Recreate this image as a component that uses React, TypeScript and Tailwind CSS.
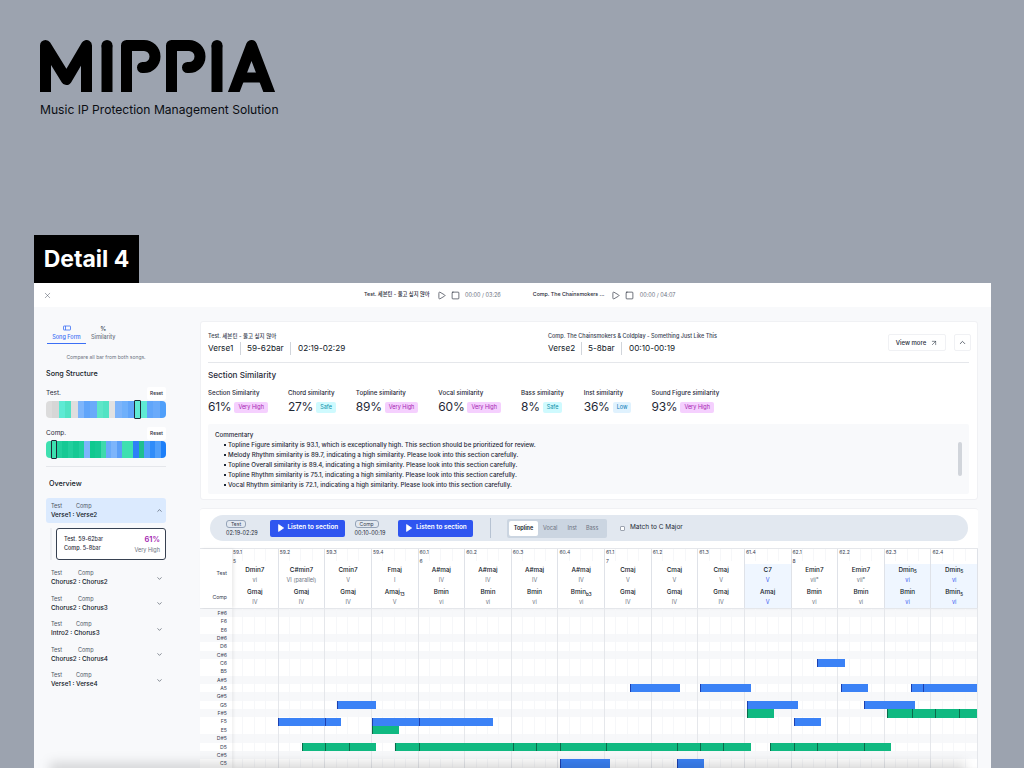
import React from 'react';
import { X, Play, Square, ChevronDown, ChevronUp, ArrowUpRight } from 'lucide-react';

const PAD_FONT = "font-['Inter','Noto_Sans_CJK_KR',sans-serif]";

const testBar = [
  '#dcdcdc', '#d6d6d6', '#5eead4', '#52e3c4', '#dedede', '#7db5fb', '#60a5fa', '#6aaafa', '#5ee6c8', '#52e3c4',
  '#e2e2e2', '#7db5fb', '#6fb0fb', '#60a5fa', '#5eead4', '#5eead4', '#60a5fa', '#6aaafa', '#4f9ffa',
];
const compBar = [
  '#3ee0b0', '#3ee0b0', '#22cf9d', '#16c994', '#22cf9d', '#16c994', '#22cf9d', '#7db5fb', '#0fc98f', '#16c994',
  '#3ed9ab', '#6aaafa', '#7db5fb', '#5b9ff8', '#3ee0b0', '#3ee0b0', '#2f80f7', '#1fbf8f', '#4f9ffa', '#2f8cf9', '#4f9ffa', '#1d7ff8',
];

const overview = [
  { test: 'Chorus2', comp: 'Chorus2', offset: 'pl-[16px]' },
  { test: 'Chorus2', comp: 'Chorus3', offset: 'pl-[16px]' },
  { test: 'Intro2', comp: 'Chorus3', offset: 'pl-[14px]' },
  { test: 'Chorus2', comp: 'Chorus4', offset: 'pl-[16px]' },
  { test: 'Verse1', comp: 'Verse4', offset: 'pl-[14px]' },
];

const stats = [
  { label: 'Section Similarity', value: '61%', level: 'Very High' },
  { label: 'Chord similarity', value: '27%', level: 'Safe' },
  { label: 'Topline similarity', value: '89%', level: 'Very High' },
  { label: 'Vocal similarity', value: '60%', level: 'Very High' },
  { label: 'Bass similarity', value: '8%', level: 'Safe' },
  { label: 'Inst similarity', value: '36%', level: 'Low' },
  { label: 'Sound Figure similarity', value: '93%', level: 'Very High' },
];

const commentary = [
  'Topline Figure similarity is 93.1, which is exceptionally high. This section should be prioritized for review.',
  'Melody Rhythm similarity is 89.7, indicating a high similarity. Please look into this section carefully.',
  'Topline Overall similarity is 89.4, indicating a high similarity. Please look into this section carefully.',
  'Topline Rhythm similarity is 75.1, indicating a high similarity. Please look into this section carefully.',
  'Vocal Rhythm similarity is 72.1, indicating a high similarity. Please look into this section carefully.',
];

const beats = [
  { pos: '59.1', bar: '5', test: 'Dmin7', testDeg: 'vi', comp: 'Gmaj', compDeg: 'IV' },
  { pos: '59.2', test: 'C#min7', testDeg: 'VI (parallel)', comp: 'Gmaj', compDeg: 'IV' },
  { pos: '59.3', test: 'Cmin7', testDeg: 'V', comp: 'Gmaj', compDeg: 'IV' },
  { pos: '59.4', test: 'Fmaj', testDeg: 'I', comp: 'Amaj', compSub: '13', compDeg: 'V' },
  { pos: '60.1', bar: '6', test: 'A#maj', testDeg: 'IV', comp: 'Bmin', compDeg: 'vi' },
  { pos: '60.2', test: 'A#maj', testDeg: 'IV', comp: 'Bmin', compDeg: 'vi' },
  { pos: '60.3', test: 'A#maj', testDeg: 'IV', comp: 'Bmin', compDeg: 'vi' },
  { pos: '60.4', test: 'A#maj', testDeg: 'IV', comp: 'Bmin', compSub: 'b3', compDeg: 'vi' },
  { pos: '61.1', bar: '7', test: 'Cmaj', testDeg: 'V', comp: 'Gmaj', compDeg: 'IV' },
  { pos: '61.2', test: 'Cmaj', testDeg: 'V', comp: 'Gmaj', compDeg: 'IV' },
  { pos: '61.3', test: 'Cmaj', testDeg: 'V', comp: 'Gmaj', compDeg: 'IV' },
  { pos: '61.4', test: 'C7', testDeg: 'V', comp: 'Amaj', compDeg: 'V', match: true },
  { pos: '62.1', bar: '8', test: 'Emin7', testDeg: 'vii°', comp: 'Bmin', compDeg: 'vi' },
  { pos: '62.2', test: 'Emin7', testDeg: 'vii°', comp: 'Bmin', compDeg: 'vi' },
  { pos: '62.3', test: 'Dmin', testSub: '5', testDeg: 'vi', comp: 'Bmin', compDeg: 'vi', match: true },
  { pos: '62.4', test: 'Dmin', testSub: '5', testDeg: 'vi', comp: 'Bmin', compSub: '5', compDeg: 'vi', match: true },
];

const pitches = [
  'F#6', 'F6', 'E6', 'D#6', 'D6', 'C#6', 'C6', 'B5', 'A#5', 'A5', 'G#5', 'G5', 'F#5', 'F5', 'E5', 'D#5', 'D5', 'C#5', 'C5',
];

// x = page px at each segment edge, row = index into pitches
const blueNotes = [
  { row: 6, x: [817, 845] },
  { row: 9, x: [629.7, 680.3] },
  { row: 9, x: [700, 751] },
  { row: 9, x: [841, 868] },
  { row: 9, x: [911, 923.3, 977.5] },
  { row: 11, x: [337, 376] },
  { row: 11, x: [747, 797.7] },
  { row: 11, x: [864.3, 915] },
  { row: 13, x: [278.3, 325.3, 340.7] },
  { row: 13, x: [372.3, 419.3, 492.7] },
  { row: 13, x: [794, 821] },
  { row: 18, x: [559.7, 610] },
  { row: 18, x: [677, 704] },
];
const greenNotes = [
  { row: 12, x: [747, 774] },
  { row: 12, x: [887.3, 911.7, 935, 958.7, 977.5] },
  { row: 14, x: [372.3, 399] },
  { row: 16, x: [301.7, 325.3, 348.7, 376] },
  { row: 16, x: [395, 419.3, 512.7, 536.3, 560, 606, 677.3, 700, 723.3, 751] },
  { row: 16, x: [770, 794.3, 817.3, 864.3, 891.3] },
];

const ROW_H = 8.35;

const Logo = () => (
  <svg width="236" height="52" viewBox="40 40 236 52" fill="none" stroke="#000" strokeWidth="11" className="block">
    <path d="M45.5 98V45.5L66.5 79.5L86.5 45.5V98" strokeLinejoin="round" />
    <path d="M107 98V45.5" />
    <circle cx="107" cy="45.5" r="5.5" fill="#000" stroke="none" />
    <path d="M126.5 98V45.5H144A11 11 0 0 1 144 67.5H142.5" strokeLinejoin="round" strokeLinecap="round" />
    <path d="M171.5 98V45.5H189A11 11 0 0 1 189 67.5H187.5" strokeLinejoin="round" strokeLinecap="round" />
    <path d="M217 98V45.5" />
    <circle cx="217" cy="45.5" r="5.5" fill="#000" stroke="none" />
    <path d="M231.5 98L251.5 45.5L271.5 98" strokeLinejoin="round" />
    <path d="M240 77.5H263" strokeWidth="10" />
  </svg>
);

const LevelPill = ({ level }: { level: string }) => {
  const tone =
    level === 'Very High'
      ? 'bg-[#f5d0fe] text-[#a21caf]'
      : level === 'Safe'
        ? 'bg-[#cffafe] text-[#0e8fa8]'
        : 'bg-[#e0f2fe] text-[#0277b5]';
  return <span className={`inline-flex h-[11px] items-center rounded-[2px] px-[4px] text-[5.5px] ${tone}`}>{level}</span>;
};

const StructureBar = ({ colors, selected }: { colors: string[]; selected: number }) => (
  <div className="flex h-[17px] overflow-visible">
    {colors.map((color, i) => (
      <div
        key={i}
        className={`relative flex-1 ${i === 0 ? 'rounded-l-[4px]' : ''} ${i === colors.length - 1 ? 'rounded-r-[4px]' : ''}`}
        style={{ backgroundColor: color }}
      >
        {i === selected && (
          <div className="absolute inset-x-0 top-[-1px] bottom-[-1px] rounded-[1px] border border-[#1f2937]" />
        )}
      </div>
    ))}
  </div>
);

const ListenGroup = ({ tag, time }: { tag: string; time: string }) => (
  <div className="flex items-center">
    <div className="flex w-[43.5px] flex-col items-start">
      <span className="rounded-[3px] border border-[#94a3b8] px-[4px] text-[5px] leading-[6px] text-[#374151]">{tag}</span>
      <span className="mt-[1px] text-[5.5px] leading-[8px] text-[#1f2937]">{time}</span>
    </div>
    <button className="flex h-[17px] w-[75px] items-center rounded-[2px] bg-[#2f55f0] pl-[8px] text-[6.4px] font-semibold text-white">
      <svg width="6" height="8" viewBox="0 0 6 8" className="mr-[4px]">
        <path d="M0.6 0.6L5.6 4L0.6 7.4Z" fill="#fff" stroke="#fff" strokeWidth="0.8" strokeLinejoin="round" />
      </svg>
      Listen to section
    </button>
  </div>
);

const App = () => {
  return (
    <div className={`relative flex h-[768px] w-[1024px] flex-col overflow-hidden bg-[#9ca3af] ${PAD_FONT}`}>
      <div className="pl-[40px] pt-[40px]">
        <Logo />
        <p className="mt-[11px] text-[12.1px] leading-[14px] text-[#0b0d12]">Music IP Protection Management Solution</p>
      </div>

      <div className="ml-[34px] mt-[118px] flex h-[48px] w-[105px] items-center justify-center bg-black pt-[1px] text-[23px] font-bold text-white">
        Detail 4
      </div>

      <div className="ml-[34px] flex w-[957px] flex-1 flex-col bg-[#f8f9fb]">
        {/* Player bar */}
        <div className="relative flex h-[24px] shrink-0 items-center whitespace-nowrap bg-white text-[5.3px] font-medium text-[#1f2937]">
          <X size={9} strokeWidth={1.2} className="ml-[9px] text-[#374151]" />
          <span className="ml-[312px] w-[67px]">Test. 세븐틴 - 울고 싶지 않아</span>
          <Play size={9} strokeWidth={1.6} className="ml-[5.5px] text-[#111827]" />
          <Square size={9} strokeWidth={1.6} className="ml-[5px] text-[#111827]" />
          <span className="ml-[5.5px] text-[5.5px] font-normal text-[#6b7280]">00:00 / 03:26</span>
          <span className="ml-[32px] w-[73px]">Comp. The Chainsmokers ...</span>
          <Play size={9} strokeWidth={1.6} className="ml-[5.5px] text-[#111827]" />
          <Square size={9} strokeWidth={1.6} className="ml-[5px] text-[#111827]" />
          <span className="ml-[5.5px] text-[5.5px] font-normal text-[#6b7280]">00:00 / 04:07</span>
        </div>

        <div className="flex min-h-0 flex-1">
          {/* Sidebar */}
          <aside className="w-[166px] shrink-0 pl-[12px] pr-[34px] pt-[18px]">
            <div className="flex text-[5.5px] font-medium">
              <div className="ml-[1px] flex w-[39px] flex-col items-center border-b border-[#3b6ff5] pb-[2px] text-[#3b6ff5]">
                <svg width="8" height="6" viewBox="0 0 8 6" fill="none" stroke="#3b6ff5" strokeWidth="0.8" className="mb-[2px]">
                  <rect x="0.5" y="1" width="7" height="4" rx="0.5" />
                  <path d="M2.5 1V5" />
                </svg>
                Song Form
              </div>
              <div className="ml-[5px] flex flex-col items-center text-[#6b7280]">
                <span className="mb-[1px] text-[6px] leading-[7px] text-[#374151]">%</span>
                Similarity
              </div>
            </div>
            <p className="mt-[10px] text-center text-[5px] leading-[7px] text-[#6b7280]">Compare all bar from both songs.</p>
            <h3 className="mt-[8px] text-[7.2px] font-medium leading-[10px] text-[#111827]">Song Structure</h3>

            <div className="mt-[7px] flex h-[15px] items-center justify-between text-[6.5px] text-[#1f2937]">
              <span>Test.</span>
              <span className="rounded-[2px] bg-white px-[3px] py-[3px] text-[4.8px] font-medium leading-[7px]">Reset</span>
            </div>
            <StructureBar colors={testBar} selected={14} />

            <div className="mt-[8px] flex h-[15px] items-center justify-between text-[6.5px] text-[#1f2937]">
              <span>Comp.</span>
              <span className="rounded-[2px] bg-white px-[3px] py-[3px] text-[4.8px] font-medium leading-[7px]">Reset</span>
            </div>
            <StructureBar colors={compBar} selected={1} />

            <div className="mt-[8px] border-t border-[#e5e7eb]" />
            <h3 className="ml-[3px] mt-[12px] text-[7.2px] font-medium leading-[10px] text-[#111827]">Overview</h3>

            <div className="mt-[9px] flex h-[25px] items-center justify-between rounded-[3px] bg-[#dbeafe] pl-[5px] pr-[3px]">
              <div>
                <div className="flex text-[5.5px] leading-[8px] text-[#4b5563]">
                  <span>Test</span>
                  <span className="pl-[14px]">Comp</span>
                </div>
                <div className="text-[6.3px] font-medium leading-[10px] text-[#111827]">Verse1 : Verse2</div>
              </div>
              <ChevronUp size={7} strokeWidth={1.8} className="text-[#1f2937]" />
            </div>

            <div className="ml-[4px] mt-[5px] flex">
              <div className="w-[2px] bg-[#eceef2]" />
              <div className="ml-[4px] flex h-[32px] flex-1 items-center justify-between rounded-[3px] border border-[#374151] bg-white pl-[7px] pr-[5px]">
                <div className="text-[5.5px] font-medium leading-[9px] text-[#1f2937]">
                  <div>Test. 59-62<span className="font-normal">bar</span></div>
                  <div>Comp. 5-8<span className="font-normal">bar</span></div>
                </div>
                <div className="text-right">
                  <div className="text-[7.5px] font-semibold leading-[10px] text-[#a21caf]">61%</div>
                  <div className="mt-[1px] text-[5.5px] leading-[8px] text-[#6b7280]">Very High</div>
                </div>
              </div>
            </div>

            <div className="mt-[5px] flex flex-col">
              {overview.map((item, i) => (
                <div key={i} className="flex h-[25.5px] items-center justify-between pl-[5px] pr-[3px]">
                  <div>
                    <div className="flex text-[5.5px] leading-[8px] text-[#4b5563]">
                      <span>Test</span>
                      <span className={item.offset}>Comp</span>
                    </div>
                    <div className="text-[6.3px] font-medium leading-[10px] text-[#111827]">
                      {item.test} : {item.comp}
                    </div>
                  </div>
                  <ChevronDown size={7} strokeWidth={1.8} className="text-[#1f2937]" />
                </div>
              ))}
            </div>
          </aside>

          {/* Main */}
          <main className="flex w-[778px] shrink-0 flex-col pt-[14px]">
            <section className="h-[179px] shrink-0 rounded-[3px] border border-[#f0f1f4] bg-white pl-[7px] pr-[8px] pt-[10px]">
              <div className="flex h-[31px] items-start border-b border-[#e5e7eb]">
                <div className="w-[340px]">
                  <p className="text-[5.5px] font-medium leading-[8px] text-[#374151]">Test. 세븐틴 - 울고 싶지 않아</p>
                  <div className="mt-[2px] flex text-[8.2px] leading-[13px] text-[#111827]">
                    <span className="w-[33px] border-r border-[#d1d5db]">Verse1</span>
                    <span className="ml-[6px] w-[44px] border-r border-[#d1d5db]">59-62bar</span>
                    <span className="ml-[7px]">02:19-02:29</span>
                  </div>
                </div>
                <div className="flex-1">
                  <p className="text-[5.5px] font-medium leading-[8px] text-[#374151]">Comp. The Chainsmokers &amp; Coldplay - Something Just Like This</p>
                  <div className="mt-[2px] flex text-[8.2px] leading-[13px] text-[#111827]">
                    <span className="w-[34px] border-r border-[#d1d5db]">Verse2</span>
                    <span className="ml-[6px] w-[34px] border-r border-[#d1d5db]">5-8bar</span>
                    <span className="ml-[7px]">00:10-00:19</span>
                  </div>
                </div>
                <button className="mt-[2px] flex h-[17px] w-[58px] items-center justify-center rounded-[2px] border border-[#f0f1f4] text-[6px] font-medium text-[#1f2937]">
                  View more
                  <ArrowUpRight size={8} strokeWidth={1.6} className="ml-[4px]" />
                </button>
                <button className="ml-[8px] mr-[-2px] mt-[2px] flex h-[17px] w-[17px] items-center justify-center rounded-[2px] border border-[#f0f1f4]">
                  <ChevronUp size={9} strokeWidth={1.8} className="text-[#1f2937]" />
                </button>
              </div>

              <h3 className="mt-[6px] text-[8.2px] font-medium leading-[12px] text-[#1f2937]">Section Similarity</h3>

              <div className="mt-[7px] flex gap-[20px]">
                {stats.map((stat) => (
                  <div key={stat.label}>
                    <div className="text-[6.2px] font-medium leading-[9px] text-[#1f2937]">{stat.label}</div>
                    <div className="mt-[1px] flex items-center gap-[3px]">
                      <span className="text-[12px] leading-[18px] tracking-[-0.02em] text-[#1f2937]">{stat.value}</span>
                      <LevelPill level={stat.level} />
                    </div>
                  </div>
                ))}
              </div>

              <div className="relative mt-[8px] h-[70px] overflow-hidden rounded-[2px] bg-[#f8f9fb] pl-[7px] pt-[6px]">
                <p className="text-[6.2px] font-medium leading-[10px] text-[#1f2937]">Commentary</p>
                <ul className="h-[48.5px] overflow-hidden text-[6.2px] font-medium leading-[10px] text-[#1f2937]">
                  {commentary.map((line) => (
                    <li key={line} className="flex items-center">
                      <span className="ml-[9px] mr-[2px] h-[2px] w-[2px] shrink-0 bg-[#1f2937]" />
                      {line}
                    </li>
                  ))}
                </ul>
                <div className="absolute right-[7px] top-[18px] h-[34px] w-[4px] rounded-full bg-[#d1d5db]" />
              </div>
            </section>

            <section className="mt-[8px] flex min-h-0 flex-1 flex-col rounded-t-[3px] border-t border-[#f0f1f4] bg-white pt-[6px]">
              {/* Toolbar */}
              <div className="mx-[10px] flex h-[26px] shrink-0 items-center rounded-full bg-[#e2e8f0] pl-[16px]">
                <ListenGroup tag="Test" time="02:19-02:29" />
                <div className="ml-[10px]">
                  <ListenGroup tag="Comp" time="00:10-00:19" />
                </div>
                <div className="ml-[17px] h-[20px] w-px bg-[#b6c2d2]" />
                <div className="ml-[16px] flex h-[19px] w-[100px] items-center rounded-[2px] bg-[#cbd5e1] pl-[2px] text-[5.5px] text-[#6b7280]">
                  <span className="flex h-[15px] w-[29px] items-center justify-center rounded-[2px] bg-white font-semibold text-[#111827]">Topline</span>
                  <span className="ml-[5px]">Vocal</span>
                  <span className="ml-[10px]">Inst</span>
                  <span className="ml-[9px]">Bass</span>
                </div>
                <span className="ml-[13px] h-[5px] w-[5px] rounded-[1px] border border-[#9ca3af] bg-white" />
                <span className="ml-[5px] text-[6.5px] text-[#1f2937]">Match to C Major</span>
              </div>

              {/* Chord header */}
              <div className="mt-[7px] grid h-[61px] shrink-0 grid-cols-[32px_repeat(16,minmax(0,1fr))] border-y border-[#e5e7eb]">
                <div className="relative text-right text-[5.2px] text-[#374151] shadow-[2px_0_3px_rgba(0,0,0,0.08)]">
                  <span className="absolute right-[5px] top-[21px]">Test</span>
                  <span className="absolute right-[5px] top-[45px]">Comp</span>
                </div>
                {beats.map((beat) => (
                  <div key={beat.pos} className="relative border-r border-[#dfe2e8] text-center">
                    <div className="absolute inset-x-0 top-0 grid h-[12px] grid-cols-4">
                      <span className="border-r border-[#f6f7f9]" />
                      <span className="border-r border-[#f6f7f9]" />
                      <span className="border-r border-[#f6f7f9]" />
                    </div>
                    <div className="absolute left-[1px] top-[0px] text-[5px] leading-[7px] text-[#374151]">{beat.pos}</div>
                    {beat.bar && <div className="absolute left-[1px] top-[9px] text-[5px] leading-[7px] text-[#374151]">{beat.bar}</div>}
                    <div className={`absolute inset-x-0 bottom-0 top-[15px] pt-[1.5px] ${beat.match ? 'bg-[#eff6ff]' : ''}`}>
                      <div className="h-[9px] text-[6.3px] font-medium leading-[9px] text-[#111827]">
                        {beat.test}
                        {beat.testSub && <span className="relative top-[1.5px] text-[4.5px] leading-none">{beat.testSub}</span>}
                      </div>
                      <div className={`mt-[1px] text-[5.5px] leading-[8px] ${beat.match ? 'text-[#2f55f0]' : 'text-[#6b7280]'}`}>{beat.testDeg}</div>
                      <div className="mt-[4.7px] h-[9px] text-[6.3px] font-medium leading-[9px] text-[#111827]">
                        {beat.comp}
                        {beat.compSub && <span className="relative top-[1.5px] text-[4.5px] leading-none">{beat.compSub}</span>}
                      </div>
                      <div className={`mt-[1px] text-[5.5px] leading-[8px] ${beat.match ? 'text-[#2f55f0]' : 'text-[#6b7280]'}`}>{beat.compDeg}</div>
                    </div>
                  </div>
                ))}
              </div>

              {/* Piano roll */}
              <div className="relative min-h-0 flex-1 overflow-hidden">
                {pitches.map((pitch) => (
                  <div
                    key={pitch}
                    className={`flex h-[8.35px] ${pitch.includes('#') ? 'bg-[#f7f8fa]' : 'bg-white'}`}
                  >
                    <span className="w-[27px] text-right text-[5.2px] leading-[8.35px] text-[#374151]">{pitch}</span>
                  </div>
                ))}
                <div className="absolute inset-y-0 left-[32px] right-0 grid grid-cols-16 shadow-[inset_2px_0_3px_rgba(0,0,0,0.05)]">
                  {beats.map((beat) => (
                    <div key={beat.pos} className="grid grid-cols-4 border-r border-[#e5e7eb]">
                      <span className="border-r border-[#f6f7f9]" />
                      <span className="border-r border-[#f6f7f9]" />
                      <span className="border-r border-[#f6f7f9]" />
                    </div>
                  ))}
                </div>

                {[...blueNotes.map((n) => ({ ...n, green: false })), ...greenNotes.map((n) => ({ ...n, green: true }))].map((note, i) => (
                  <div key={i} className="absolute h-[8.35px]" style={{ top: note.row * ROW_H }}>
                    {note.x.slice(0, -1).map((x, j) => (
                      <div
                        key={j}
                        className={`absolute top-0 h-[8.35px] border-l ${note.green ? 'border-[#0a6b4a] bg-[#10b981]' : 'border-[#1e40af] bg-[#3b82f6]'}`}
                        style={{ left: x - 200, width: note.x[j + 1] - x }}
                      />
                    ))}
                  </div>
                ))}
              </div>
            </section>
          </main>
        </div>
      </div>

      {/* Soft shadow along the bottom edge of the shot */}
      <div className="absolute bottom-[-9px] left-[50px] h-[14px] w-[915px] bg-black/15 blur-[6px]" />
    </div>
  );
};

export default App;
